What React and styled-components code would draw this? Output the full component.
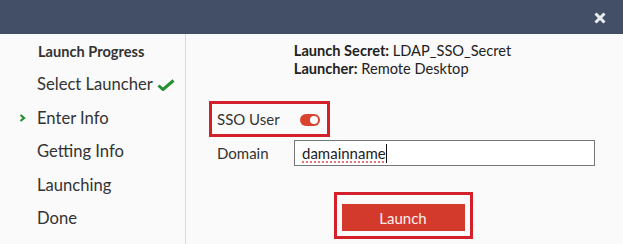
import React from 'react';
import styled, { createGlobalStyle } from 'styled-components';

const GlobalStyle = createGlobalStyle`
  html, body {
    margin: 0;
    padding: 0;
    background: #fafafa;
  }
  body {
    font-family: Lato, 'Open Sans', sans-serif;
    color: #333;
  }
`;

const Dialog = styled.div`
  width: 623px;
  height: 244px;
  display: flex;
  flex-direction: column;
  background: #fafafa;
  overflow: hidden;
`;

const Header = styled.div`
  height: 34px;
  flex: none;
  background: #434f67;
  display: flex;
  align-items: center;
  justify-content: flex-end;
  padding-right: 16px;
`;

const CloseButton = styled.button`
  border: 0;
  background: none;
  padding: 0;
  width: 14px;
  height: 14px;
  display: flex;
  align-items: center;
  justify-content: center;
  cursor: pointer;
  margin-top: 1px;
`;

const Body = styled.div`
  flex: 1;
  display: flex;
`;

const Sidebar = styled.div`
  width: 186px;
  flex: none;
  border-right: 1px solid #dadada;
  padding: 9px 0 0 0;
  box-sizing: border-box;
`;

const SidebarTitle = styled.div`
  font-size: 14.6px;
  font-weight: 700;
  line-height: 17px;
  padding-left: 38px;
  margin-bottom: 8px;
  color: #333;
`;

const StepList = styled.ul`
  list-style: none;
  margin: 0;
  padding: 0;
`;

const Step = styled.li`
  position: relative;
  font-size: 16.6px;
  line-height: 33.5px;
  padding-left: 37px;
  color: #333;
  display: flex;
  align-items: center;
  gap: 4px;
`;

const Marker = styled.span`
  position: absolute;
  left: 19px;
  top: 12px;
  display: flex;
`;

const Pane = styled.div`
  flex: 1;
  display: flex;
  flex-direction: column;
  padding: 8px 28px 0 23px;
`;

const Info = styled.div`
  align-self: center;
  font-size: 14.6px;
  line-height: 18px;
  color: #222;
  margin-left: 1px;
`;

const Highlight = styled.div`
  border: 3px solid #d4202a;
  align-self: ${p => (p.$center ? 'center' : 'flex-start')};
  display: inline-flex;
  align-items: center;
`;

const SsoBox = styled(Highlight)`
  margin-top: 23px;
  height: 30px;
  padding: 0 7px 0 5px;
  gap: 20px;
`;

const Label = styled.span`
  font-size: 15px;
  color: #333;
`;

const Toggle = styled.span`
  width: 20px;
  height: 12px;
  border-radius: 6px;
  background: ${p => (p.$on ? '#d9432c' : '#bbb')};
  position: relative;
  margin-top: 1px;

  &::after {
    content: '';
    position: absolute;
    top: 2px;
    left: ${p => (p.$on ? '10px' : '2px')};
    width: 8px;
    height: 8px;
    border-radius: 50%;
    background: #fff;
  }
`;

const FieldRow = styled.div`
  margin-top: 3px;
  display: flex;
  align-items: center;
  padding-left: 8px;
`;

const FieldLabel = styled(Label)`
  width: 77px;
  flex: none;
`;

const TextField = styled.div`
  flex: 1;
  height: 26px;
  box-sizing: border-box;
  border: 1px solid #777;
  background: #fff;
  padding: 0 7px;
  display: flex;
  align-items: center;
  font-size: 15px;
  color: #222;
`;

const Misspelled = styled.span`
  text-decoration: underline dotted #e0484a;
  text-underline-offset: 3px;
`;

const Caret = styled.span`
  width: 1px;
  height: 19px;
  background: #111;
`;

const LaunchBox = styled(Highlight)`
  margin-top: 26px;
  padding: 9px 5px 5px 5px;
  margin-left: 2px;
`;

const LaunchButton = styled.button`
  width: 123px;
  height: 27px;
  border: 0;
  background: #d33a2c;
  color: #fdeeee;
  font-family: Lato, sans-serif;
  font-size: 15px;
  cursor: pointer;
  padding: 0;
`;

const steps = [
  { label: 'Select Launcher', done: true },
  { label: 'Enter Info', current: true },
  { label: 'Getting Info' },
  { label: 'Launching' },
  { label: 'Done' },
];

const CheckIcon = () => (
  <svg width="18" height="12" viewBox="0 0 18 12">
    <path d="M1.5 6.5 L6 10.5 L16.5 1.5" fill="none" stroke="#23902f" strokeWidth="3" />
  </svg>
);

const ChevronIcon = () => (
  <svg width="7" height="8" viewBox="0 0 7 8">
    <path d="M1.5 1 L5 4 L1.5 7" fill="none" stroke="#23902f" strokeWidth="2.2" />
  </svg>
);

export default function App() {
  return (
    <>
      <GlobalStyle />
      <Dialog>
        <Header>
          <CloseButton aria-label="close">
            <svg width="12" height="12" viewBox="0 0 12 12">
              <path d="M1.5 1.5 L10.5 10.5 M10.5 1.5 L1.5 10.5" stroke="#e9edf3" strokeWidth="3" />
            </svg>
          </CloseButton>
        </Header>
        <Body>
          <Sidebar>
            <SidebarTitle>Launch Progress</SidebarTitle>
            <StepList>
              {steps.map(s => (
                <Step key={s.label}>
                  {s.current && (
                    <Marker>
                      <ChevronIcon />
                    </Marker>
                  )}
                  {s.label}
                  {s.done && <CheckIcon />}
                </Step>
              ))}
            </StepList>
          </Sidebar>
          <Pane>
            <Info>
              <div>
                <b>Launch Secret:</b> LDAP_SSO_Secret
              </div>
              <div>
                <b>Launcher:</b> Remote Desktop
              </div>
            </Info>
            <SsoBox>
              <Label>SSO User</Label>
              <Toggle $on />
            </SsoBox>
            <FieldRow>
              <FieldLabel>Domain</FieldLabel>
              <TextField>
                <Misspelled>damainname</Misspelled>
                <Caret />
              </TextField>
            </FieldRow>
            <LaunchBox $center>
              <LaunchButton>Launch</LaunchButton>
            </LaunchBox>
          </Pane>
        </Body>
      </Dialog>
    </>
  );
}
